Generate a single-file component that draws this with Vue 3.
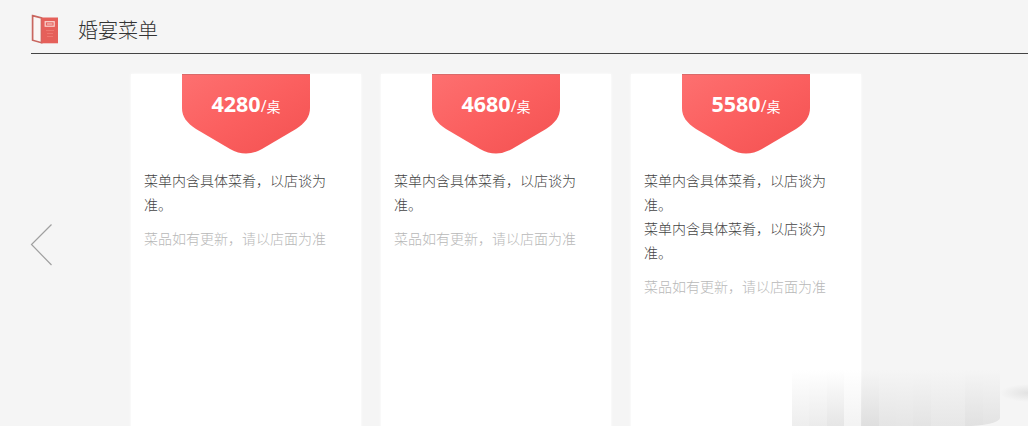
<template>
  <div class="menu-page">
    <!-- 标题栏 -->
    <header class="menu-header">
      <svg class="menu-icon" width="28" height="31" viewBox="0 0 28 31">
        <path d="M1.6 1.7 L10.5 3.8 V28.7 L1.6 26.2 Z" fill="#faf6f5" stroke="#c9665f" stroke-width="1.7" />
        <path d="M10.5 3.5 H27 V29.3 H10.5 Z" fill="#e5605a" />
        <rect x="14.2" y="7.7" width="9" height="4.5" fill="none" stroke="#f9d5d0" stroke-width="1.2" />
        <path d="M16 10 H21.5" stroke="#f9d5d0" />
        <path d="M15 16.5 H23 M16 19.5 H22 M16 22.5 H22" stroke="#ee7770" />
      </svg>
      <h2>婚宴菜单</h2>
    </header>

    <div class="carousel">
      <!-- 上一张按钮 -->
      <button class="prev" aria-label="上一张">
        <svg width="22" height="42" viewBox="0 0 22 42">
          <path d="M21.5 0.5 L1.5 20.5 L21.5 41" fill="none" stroke="#a0a0a0" stroke-width="1.2" />
        </svg>
      </button>

      <!-- 菜单卡片 -->
      <div class="cards">
        <div v-for="menu in menus" :key="menu.price" class="card">
          <div class="badge">
            <svg class="badge-bg" width="128" height="80" viewBox="0 0 128 80">
              <defs>
                <linearGradient id="badgeColor" x1="0" y1="0" x2="1" y2="1">
                  <stop offset="0" stop-color="#fd7070" />
                  <stop offset="0.5" stop-color="#fb5f5f" />
                  <stop offset="1" stop-color="#f35151" />
                </linearGradient>
              </defs>
              <path d="M0 0 H128 V34 C128 43 123 49 114 55 L80 75 Q64 84 48 75 L14 55 C5 49 0 43 0 34 Z" fill="url(#badgeColor)" />
              <path d="M0 0.5 H128" stroke="#d96a6a" />
            </svg>
            <p class="price"><strong>{{ menu.price }}</strong><span class="slash">/</span><span>桌</span></p>
          </div>
          <div class="content">
            <p v-for="(item, index) in menu.items" :key="index">{{ item }}</p>
            <p class="tip">菜品如有更新，请以店面为准</p>
          </div>
        </div>
      </div>
    </div>

    <!-- 右下角渐变阴影 -->
    <div class="shade">
      <i v-for="(opacity, index) in shades" :key="index" :style="{ opacity }"></i>
    </div>
    <div class="streak"></div>
  </div>
</template>

<script setup>
const text = '菜单内含具体菜肴，以店谈为准。'

// 菜单数据
const menus = [
  { price: 4280, items: [text] },
  { price: 4680, items: [text] },
  { price: 5580, items: [text, text] },
]

// 每一列阴影的深浅
const shades = [0.42, 0.48, 0.62, 0.3, 0.66, 0.48, 0.46, 0.52, 0.42, 0.42, 0.6, 0.54]
</script>

<style>
body {
  margin: 0;
  overflow: hidden;
}
</style>

<style scoped>
.menu-page {
  position: relative;
  display: flex;
  flex-direction: column;
  height: 426px;
  overflow: hidden;
  background: #f5f5f5;
  font-family: "Open Sans", "Noto Sans CJK SC", sans-serif;
}

.menu-header {
  display: flex;
  align-items: center;
  flex: none;
  box-sizing: border-box;
  height: 54px;
  margin-left: 31px;
  padding-top: 5px;
  border-bottom: 1px solid #444;
}

h2 {
  margin: 1px 0 0 19px;
  color: #333;
  font-family: "Noto Sans CJK SC", sans-serif;
  font-size: 20px;
  font-weight: 300;
  line-height: 30px;
}

.carousel {
  display: flex;
  flex: 1;
  min-height: 0;
  padding: 20px 0 0 30px;
}

.prev {
  width: 22px;
  height: 42px;
  margin: 150px 79px 0 0;
  padding: 0;
  border: 0;
  background: none;
  cursor: pointer;
}

.prev svg {
  display: block;
}

.cards {
  display: flex;
  gap: 20px;
}

.card {
  width: 230px;
  height: 400px;
  background: #fff;
  box-shadow: 0 0 3px #fff;
}

.badge {
  position: relative;
  width: 128px;
  height: 80px;
  margin: 0 auto 0 51px;
}

.badge-bg {
  position: absolute;
  top: 0;
  left: 0;
}

.price {
  position: relative;
  margin: 0;
  padding-top: 15px;
  color: #fff;
  font-size: 14px;
  line-height: 30px;
  text-align: center;
  white-space: nowrap;
}

.price strong {
  font-size: 21.5px;
  font-weight: 700;
}

.slash {
  font-size: 16px;
}

.content {
  width: 190px;
  padding: 14px 0 0 13px;
  font-family: "Noto Sans CJK SC", sans-serif;
  font-size: 14px;
  line-height: 24px;
}

.content p {
  margin: 0;
  color: #444;
  font-weight: 300;
}

.content .tip {
  margin-top: 10px;
  color: #b8b8b8;
}

.shade {
  position: absolute;
  right: 28px;
  bottom: 0;
  display: flex;
  width: 208px;
  height: 56px;
  overflow: hidden;
  border-bottom-right-radius: 36px 8px;
}

.shade i {
  flex: 1;
  background: linear-gradient(rgba(200, 200, 200, 0), rgba(200, 200, 200, 0.75));
}

.streak {
  position: absolute;
  right: 0;
  bottom: 24px;
  width: 28px;
  height: 18px;
  background: radial-gradient(ellipse at 100% 50%, #e2e2e2, rgba(245, 245, 245, 0) 70%);
}
</style>
